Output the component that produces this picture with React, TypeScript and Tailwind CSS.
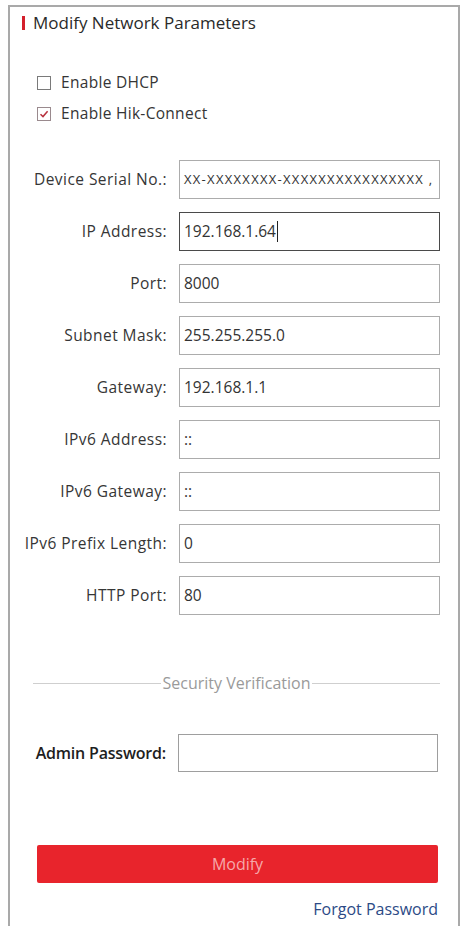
import { useState } from "react"

const fields = [
  { label: "Device Serial No.:", value: "XX-XXXXXXXX-XXXXXXXXXXXXXXXX ,", serial: true },
  { label: "IP Address:", value: "192.168.1.64", focused: true },
  { label: "Port:", value: "8000" },
  { label: "Subnet Mask:", value: "255.255.255.0" },
  { label: "Gateway:", value: "192.168.1.1" },
  { label: "IPv6 Address:", value: "::" },
  { label: "IPv6 Gateway:", value: "::" },
  { label: "IPv6 Prefix Length:", value: "0" },
  { label: "HTTP Port:", value: "80" },
]

function Checkbox({ checked, label }: { checked: boolean; label: string }) {
  return (
    <div className="flex h-[30px] items-center pl-[27px]">
      <span
        className={`flex h-[14px] w-[14px] items-center justify-center border bg-white ${
          checked ? "border-[#9a8a8e]" : "border-[#7a7a7a]"
        }`}
      >
        {checked && (
          <svg width="10" height="10" viewBox="0 0 10 10">
            <path d="M1.5 5.2 L4 7.6 L8.6 2.2" fill="none" stroke="#b8323e" strokeWidth="1.5" />
          </svg>
        )}
      </span>
      <span className="ml-[10px] text-[15.5px] tracking-[0.3px] text-[#353535]">{label}</span>
    </div>
  )
}

export default function App() {
  const [password, setPassword] = useState("")

  return (
    <div
      className="h-[926px] w-[462px] overflow-hidden bg-white pl-[8px] pt-[5px]"
      style={{ fontFamily: '"Open Sans", "Liberation Sans", sans-serif' }}
    >
      <div className="h-[940px] w-[452px] border-2 border-[#a9a9a9] bg-white">
        {/* title */}
        <div className="flex h-[32px] items-center pl-[12px]">
          <span className="h-[14px] w-[3px] bg-[#d4202c]" />
          <span className="ml-[8px] text-[17px] text-[#2a2a2a]">Modify Network Parameters</span>
        </div>

        <div className="mt-[29px] flex flex-col gap-[1px]">
          <Checkbox checked={false} label="Enable DHCP" />
          <Checkbox checked label="Enable Hik-Connect" />
        </div>

        {/* network fields */}
        <div className="mt-[31px] flex flex-col gap-[13px]">
          {fields.map((f, i) => (
            <div key={i} className="flex h-[39px] items-center gap-[12px]">
              <div className="w-[157px] whitespace-nowrap text-right text-[15.5px] tracking-[0.45px] text-[#363636]">
                {f.label}
              </div>
              <div
                className={`flex h-[39px] w-[261px] items-center overflow-hidden whitespace-nowrap pl-[4px] text-[#333] ${
                  f.focused ? "border-[1.5px] border-[#4a4a4a]" : "border-[1.5px] border-[#acacac]"
                } ${f.serial ? "text-[13px] tracking-[1.3px]" : "text-[15.5px]"}`}
              >
                {f.value}
                {f.focused && <span className="ml-[1px] h-[21px] w-[1.5px] bg-[#222]" />}
              </div>
            </div>
          ))}
        </div>

        {/* security verification */}
        <div className="mt-[58px] flex h-[20px] items-center pl-[23px] pr-[18px]">
          <div className="h-px flex-1 bg-[#cfcfcf]" />
          <span className="px-[2px] text-[16px] text-[#9a9a9a]">Security Verification</span>
          <div className="h-px flex-1 bg-[#cfcfcf]" />
        </div>

        <div className="mt-[41px] flex h-[38px] items-center gap-[12px]">
          <div className="w-[156px] whitespace-nowrap text-right text-[16px] font-semibold tracking-[-0.2px] text-[#1e1e1e]">
            Admin Password:
          </div>
          <input
            type="password"
            value={password}
            onChange={(e) => setPassword(e.target.value)}
            className="h-[38px] w-[260px] border-[1.5px] border-[#9e9e9e] bg-white px-[4px] text-[14px] outline-none"
          />
        </div>

        <div className="mt-[73px] pl-[27px]">
          <button className="flex h-[38px] w-[401px] items-center justify-center rounded-[2px] bg-[#e8242c] text-[16px] text-[#f6a9ab]">
            Modify
          </button>
        </div>

        <div className="mt-[16px] flex h-[20px] items-center justify-end pr-[20px]">
          <span className="text-[16px] text-[#2c4a86]">Forgot Password</span>
        </div>
      </div>
    </div>
  )
}
